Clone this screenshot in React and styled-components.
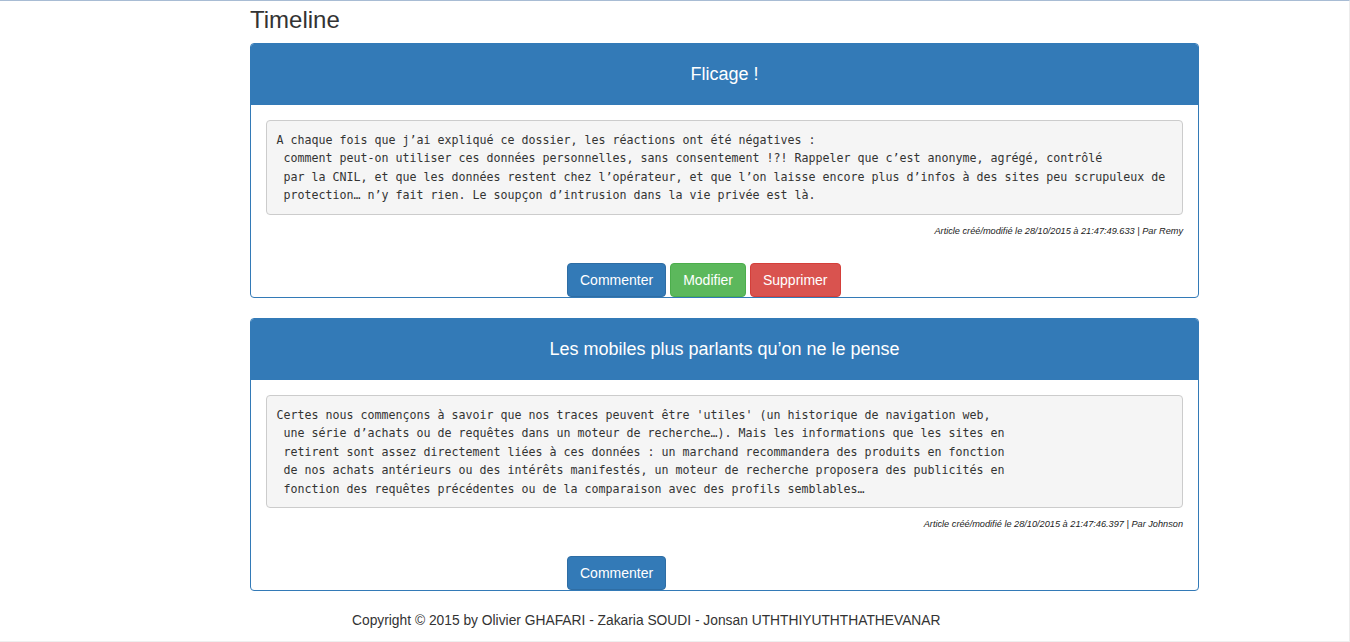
import React from 'react';
import styled, { createGlobalStyle } from 'styled-components';

const GlobalStyle = createGlobalStyle`
  html, body {
    margin: 0;
    padding: 0;
    background: #fff;
  }
  body {
    font-family: "Liberation Sans", Arial, sans-serif;
    font-size: 14px;
    line-height: 1.42857;
    color: #333;
  }
`;

const Page = styled.div`
  box-sizing: border-box;
  min-height: 642px;
  border-top: 1px solid #a8bcd4;
  border-right: 1px solid #ececec;
  border-bottom: 1px solid #efefef;
`;

const Container = styled.div`
  width: 949px;
  margin-left: 250px;
`;

const Title = styled.h1`
  margin: 6px 0 10px;
  font-size: 24px;
  font-weight: normal;
  line-height: 1.1;
  color: #333;
`;

const Panel = styled.div`
  border: 1px solid #337ab7;
  border-radius: 4px;
  margin-bottom: 20px;
  background: #fff;
`;

const PanelHeading = styled.div`
  height: 61px;
  display: flex;
  align-items: center;
  justify-content: center;
  background: #337ab7;
  color: #fff;
  font-size: 18px;
  border-radius: 3px 3px 0 0;
`;

const PanelBody = styled.div`
  padding: 15px 15px 0;
`;

const Content = styled.pre`
  margin: 0 0 10px;
  padding: 9.5px;
  background: #f5f5f5;
  border: 1px solid #ccc;
  border-radius: 4px;
  font-family: "DejaVu Sans Mono", "Liberation Mono", monospace;
  font-size: 11.63px;
  line-height: 18.45px;
  color: #333;
  white-space: pre-wrap;
`;

const Meta = styled.div`
  text-align: right;
  font-style: italic;
  font-size: 9.2px;
  line-height: 13px;
  color: #222;
`;

const Actions = styled.div`
  display: flex;
  gap: 4px;
  margin-top: 25px;
  padding-left: 301px;
`;

const tones = {
  primary: { bg: '#337ab7', border: '#2e6da4' },
  success: { bg: '#5cb85c', border: '#4cae4c' },
  danger: { bg: '#d9534f', border: '#d43f3a' },
};

const Button = styled.button`
  box-sizing: border-box;
  height: 34px;
  padding: 6px 12px;
  font-family: "Liberation Sans", Arial, sans-serif;
  font-size: 14px;
  line-height: 20px;
  color: #fff;
  background: ${p => tones[p.$tone].bg};
  border: 1px solid ${p => tones[p.$tone].border};
  border-radius: 4px;
  cursor: pointer;
`;

const Footer = styled.footer`
  padding: 0 0 10px 102px;
  font-size: 13.8px;
  line-height: 20px;
  color: #333;
`;

const articles = [
  {
    title: 'Flicage !',
    text:
      'A chaque fois que j’ai expliqué ce dossier, les réactions ont été négatives :\n' +
      ' comment peut-on utiliser ces données personnelles, sans consentement !?! Rappeler que c’est anonyme, agrégé, contrôlé\n' +
      ' par la CNIL, et que les données restent chez l’opérateur, et que l’on laisse encore plus d’infos à des sites peu scrupuleux de\n' +
      ' protection… n’y fait rien. Le soupçon d’intrusion dans la vie privée est là.',
    meta: 'Article créé/modifié le 28/10/2015 à 21:47:49.633 | Par Remy',
    owner: true,
  },
  {
    title: 'Les mobiles plus parlants qu’on ne le pense',
    text:
      "Certes nous commençons à savoir que nos traces peuvent être 'utiles' (un historique de navigation web,\n" +
      ' une série d’achats ou de requêtes dans un moteur de recherche…). Mais les informations que les sites en\n' +
      ' retirent sont assez directement liées à ces données : un marchand recommandera des produits en fonction\n' +
      ' de nos achats antérieurs ou des intérêts manifestés, un moteur de recherche proposera des publicités en\n' +
      ' fonction des requêtes précédentes ou de la comparaison avec des profils semblables…',
    meta: 'Article créé/modifié le 28/10/2015 à 21:47:46.397 | Par Johnson',
    owner: false,
  },
];

const App = () => (
  <>
    <GlobalStyle />
    <Page>
      <Container>
        <Title>Timeline</Title>
        {articles.map((a, i) => (
          <Panel key={i}>
            <PanelHeading>{a.title}</PanelHeading>
            <PanelBody>
              <Content>{a.text}</Content>
              <Meta>{a.meta}</Meta>
              <Actions>
                <Button $tone="primary">Commenter</Button>
                {a.owner && <Button $tone="success">Modifier</Button>}
                {a.owner && <Button $tone="danger">Supprimer</Button>}
              </Actions>
            </PanelBody>
          </Panel>
        ))}
        <Footer>Copyright © 2015 by Olivier GHAFARI - Zakaria SOUDI - Jonsan UTHTHIYUTHTHATHEVANAR</Footer>
      </Container>
    </Page>
  </>
);

export default App;
